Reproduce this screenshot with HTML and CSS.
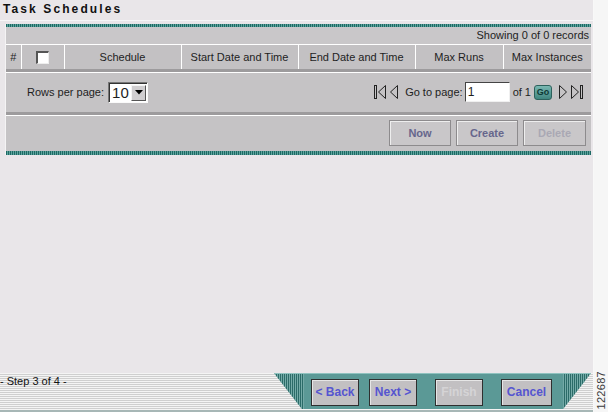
FILE: index.html
```html
<!DOCTYPE html>
<html>
<head lang="en">
    <meta charset="UTF-8">
    <title>Task Schedules</title>
    <link rel="stylesheet" href="styles.css">
</head>
<body>
<div class="page">
    <div class="title">Task Schedules</div>

    <div class="panel">
        <div class="teal-rule"></div>
        <div class="showing">Showing 0 of 0 records</div>
        <table class="grid">
            <tr>
                <th class="c-num">#</th>
                <th class="c-chk"><span class="chk"></span></th>
                <th class="c-wide">Schedule</th>
                <th class="c-wide">Start Date and Time</th>
                <th class="c-wide">End Date and Time</th>
                <th class="c-mid">Max Runs</th>
                <th class="c-mid">Max Instances</th>
            </tr>
        </table>
        <div class="sep"></div>

        <div class="pager">
            <span class="rpp">Rows per page:</span>
            <span class="select"><span class="sel-val">10</span><span class="sel-btn"><svg width="8" height="5" viewBox="0 0 8 5"><polygon points="0,0 8,0 4,4.5" fill="#000"/></svg></span></span>
            <span class="nav">
                <svg class="ico" width="13" height="16" viewBox="0 0 13 16"><rect x="0.5" y="1.5" width="2" height="13" fill="none" stroke="#222"/><polygon points="11.5,1.5 4.5,8 11.5,14.5" fill="none" stroke="#222"/></svg>
                <svg class="ico" width="10" height="16" viewBox="0 0 10 16"><polygon points="8.5,1.5 1.5,8 8.5,14.5" fill="none" stroke="#222"/></svg>
                <span class="goto">Go to page:</span>
                <span class="pgbox">1</span>
                <span class="of">of 1</span>
                <span class="go">Go</span>
                <svg class="ico" width="10" height="16" viewBox="0 0 10 16"><polygon points="1.5,1.5 8.5,8 1.5,14.5" fill="none" stroke="#222"/></svg>
                <svg class="ico" width="13" height="16" viewBox="0 0 13 16"><polygon points="1.5,1.5 8.5,8 1.5,14.5" fill="none" stroke="#222"/><rect x="10.5" y="1.5" width="2" height="13" fill="none" stroke="#222"/></svg>
            </span>
        </div>
        <div class="sep"></div>

        <div class="actions">
            <span class="btn">Now</span>
            <span class="btn">Create</span>
            <span class="btn off">Delete</span>
        </div>
        <div class="teal-rule bottom"></div>
    </div>

    <div class="spacer"></div>

    <div class="wizard">
        <span class="step">- Step 3 of 4 -</span>
        <div class="dock">
            <span class="wbtn">&lt; Back</span>
            <span class="wbtn">Next &gt;</span>
            <span class="wbtn off">Finish</span>
            <span class="wbtn cancel">Cancel</span>
        </div>
    </div>
</div>
<div class="fig-id"><span>122687</span></div>
</body>
</html>
```

FILE: styles.css
```css
* {
    padding: 0;
    margin: 0;
    box-sizing: border-box;
}
body {
    width: 608px;
    height: 412px;
    display: flex;
    background: #f6f6f6;
    font-family: "Liberation Sans", Arial, sans-serif;
    font-size: 11px;
    color: #1e1e1e;
    overflow: hidden;
}
.page {
    width: 594px;
    height: 412px;
    display: flex;
    flex-direction: column;
    background: #e9e6e9;
    border-right: 1px solid #f8f8f8;
}
.title {
    height: 21px;
    padding: 2px 0 0 3px;
    font-size: 12px;
    font-weight: bold;
    letter-spacing: 2.1px;
    color: #111;
    border-bottom: 1px solid #f7f6f7;
}

/* table panel */
.panel {
    margin: 3px 0 0 5px;
    width: 586px;
    border-left: 1px solid #f4f3f4;
    background: #c5c3c5;
}
.teal-rule {
    height: 3px;
    background: repeating-linear-gradient(90deg, #1d6a64 0 1px, #5ea39d 1px 2px);
}
.teal-rule.bottom {height: 4px;}
.showing {
    height: 17px;
    line-height: 17px;
    text-align: right;
    padding-right: 2px;
    background: #c9c7c9;
}
.grid {
    width: 585px;
    border-collapse: collapse;
    table-layout: fixed;
    border-top: 1px solid #fff;
}
.grid th {
    height: 24px;
    font-weight: normal;
    text-align: center;
    border-left: 1px solid #fff;
    background: #c3c1c3;
}
.grid th:first-child {border-left: 0;}
.c-num {width: 15px;}
.c-chk {width: 43px;}
.c-wide {width: 117px;}
.c-mid {width: 88px;}
.chk {
    display: inline-block;
    width: 13px;
    height: 13px;
    vertical-align: middle;
    background: #fff;
    border-top: 2px solid #555;
    border-left: 2px solid #555;
    border-right: 1px solid #eee;
    border-bottom: 1px solid #eee;
}
.sep {
    height: 4px;
    border-top: 3px solid #9d9b9d;
    background: #fff;
}

/* rows per page + paging */
.pager {
    height: 39px;
    display: flex;
    align-items: center;
    padding: 0 6px 0 21px;
}
.rpp {margin-right: 4px;}
.select {
    display: flex;
    height: 21px;
    width: 40px;
    background: #fff;
    border-top: 1px solid #777;
    border-left: 1px solid #777;
    border-right: 1px solid #fafafa;
    border-bottom: 1px solid #fafafa;
    box-shadow: inset 1px 1px 0 #333;
}
.sel-val {
    flex: 1;
    font-size: 15px;
    line-height: 19px;
    padding-left: 3px;
}
.sel-btn {
    width: 15px;
    margin: 2px 1px 1px 0;
    display: flex;
    align-items: center;
    justify-content: center;
    background: #d0ced0;
    border-top: 1px solid #f4f4f4;
    border-left: 1px solid #f4f4f4;
    border-right: 1px solid #555;
    border-bottom: 1px solid #555;
}
.nav {
    margin-left: auto;
    display: flex;
    align-items: center;
}
.ico {display: block; margin-right: 2px;}
.goto {margin: 0 2px 0 4px;}
.pgbox {
    width: 45px;
    height: 20px;
    line-height: 18px;
    font-size: 12px;
    padding-left: 2px;
    background: #fff;
    border-top: 1px solid #444;
    border-left: 1px solid #444;
    border-right: 1px solid #f0f0f0;
    border-bottom: 1px solid #f0f0f0;
}
.of {margin: 0 3px 0 3px;}
.go {
    width: 18px;
    height: 15px;
    margin-right: 6px;
    border-radius: 3px;
    font-size: 9px;
    font-weight: bold;
    line-height: 13px;
    text-align: center;
    color: #0e3a36;
    background: linear-gradient(#7ab8b2, #3f857f);
    border: 1px solid #2d615c;
}

/* action buttons */
.actions {
    height: 35px;
    display: flex;
    justify-content: flex-end;
    align-items: flex-start;
    gap: 5px;
    padding: 4px 5px 0 0;
}
.btn {
    width: 62px;
    height: 26px;
    line-height: 24px;
    text-align: center;
    font-weight: bold;
    color: #66668c;
    background: #c9c7c9;
    border: 1px solid #8d8b8d;
    box-shadow: inset 1px 1px 0 #eeeeee;
}
.btn:last-child {width: 63px;}
.btn.off {color: #a9a8b4;}

.spacer {flex: 1;}

/* wizard bar */
.wizard {
    height: 39px;
    display: flex;
    justify-content: space-between;
    padding-right: 2px;
    background: repeating-linear-gradient(180deg, #f4f4f4 0 1px, #cfcfcf 1px 2px);
    border-bottom: 2px solid #a7b7b6;
}
.step {
    padding-top: 2px;
    line-height: 13px;
    color: #111;
}
.dock {
    width: 317px;
    height: 36px;
    display: flex;
    align-items: flex-start;
    padding: 5px 0 0 37px;
    clip-path: polygon(0 0, 100% 0, 289px 100%, 28px 100%);
    background:
        repeating-linear-gradient(90deg, #2b6b68 0 1px, #74aaa7 1px 2px) left top / 30px 100% no-repeat,
        repeating-linear-gradient(90deg, #74aaa7 0 1px, #2b6b68 1px 2px) right top / 28px 100% no-repeat,
        #5b9996;
    border-top: 1px solid #8fc2bf;
}
.wbtn {
    width: 48px;
    height: 27px;
    margin-right: 10px;
    line-height: 25px;
    text-align: center;
    font-size: 12px;
    font-weight: bold;
    color: #5555d0;
    background: #c2c0c2;
    border: 1px solid #2f2f2f;
    box-shadow: inset 1px 1px 0 #e6e6e6;
}
.wbtn:nth-child(2) {margin-right: 18px;}
.wbtn:nth-child(3) {margin-right: 18px;}
.wbtn.off {color: #d5d4d6;}
.wbtn.cancel {width: 51px;}

.fig-id {
    flex: 1;
    display: flex;
    justify-content: center;
    align-items: flex-end;
    padding-bottom: 2px;
}
.fig-id span {
    writing-mode: vertical-rl;
    transform: rotate(180deg);
    font-size: 11px;
    color: #3a3a3a;
    letter-spacing: 0.3px;
}
```
